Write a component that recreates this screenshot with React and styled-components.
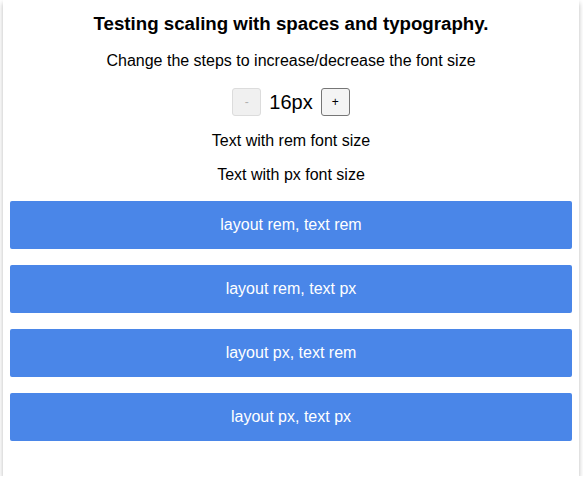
import React, { useState } from "react"
import styled, { createGlobalStyle } from "styled-components"

const GlobalStyle = createGlobalStyle`
  body {
    margin: 0;
    background: #ffffff;
    font-family: "Liberation Sans", Arial, sans-serif;
    color: #000000;
  }
`

const Page = styled.div`
  padding: 0 4px 0 3px;
`

const Card = styled.div`
  background: #ffffff;
  box-shadow: 0 3px 5px rgba(0, 0, 0, 0.28);
  padding: 12px 7px 35px;
  display: flex;
  flex-direction: column;
  align-items: center;
`

const Title = styled.h1`
  margin: 0;
  font-size: 18.7px;
  line-height: 24px;
  font-weight: bold;
`

const Subtitle = styled.p`
  margin: 14px 0 0;
  font-size: 16px;
  line-height: 22px;
`

const Stepper = styled.div`
  margin-top: 16px;
  display: flex;
  align-items: center;
  gap: 8px;
`

const StepButton = styled.button`
  width: 29px;
  height: 28px;
  padding: 0;
  border-radius: 3px;
  font-family: "Liberation Sans", Arial, sans-serif;
  font-size: 12px;
  border: 1px solid ${(p) => (p.disabled ? "#dcdcdc" : "#767676")};
  background: ${(p) => (p.disabled ? "#f0f0f0" : "#f4f4f4")};
  color: ${(p) => (p.disabled ? "#b0b0b0" : "#000000")};
`

const Size = styled.span`
  font-size: 20px;
  line-height: 28px;
`

const Line = styled.p`
  margin: ${(p) => p.$top}px 0 0;
  font-size: 16px;
  line-height: 22px;
`

const Buttons = styled.div`
  margin-top: 15px;
  align-self: stretch;
  display: flex;
  flex-direction: column;
  gap: 16px;
`

const Block = styled.div`
  height: 48px;
  border-radius: 2px;
  background: #4a86e8;
  color: #ffffff;
  font-size: 16px;
  display: flex;
  align-items: center;
  justify-content: center;
`

const labels = [
  "layout rem, text rem",
  "layout rem, text px",
  "layout px, text rem",
  "layout px, text px",
]

export default function App() {
  const [size, setSize] = useState(16)

  return (
    <Page>
      <GlobalStyle />
      <Card>
        <Title>Testing scaling with spaces and typography.</Title>
        <Subtitle>Change the steps to increase/decrease the font size</Subtitle>
        <Stepper>
          <StepButton disabled={size <= 16} onClick={() => setSize(size - 1)}>
            -
          </StepButton>
          <Size>{size}px</Size>
          <StepButton onClick={() => setSize(size + 1)}>+</StepButton>
        </Stepper>
        <Line $top={14}>Text with rem font size</Line>
        <Line $top={12}>Text with px font size</Line>
        <Buttons>
          {labels.map((label) => (
            <Block key={label}>{label}</Block>
          ))}
        </Buttons>
      </Card>
    </Page>
  )
}
